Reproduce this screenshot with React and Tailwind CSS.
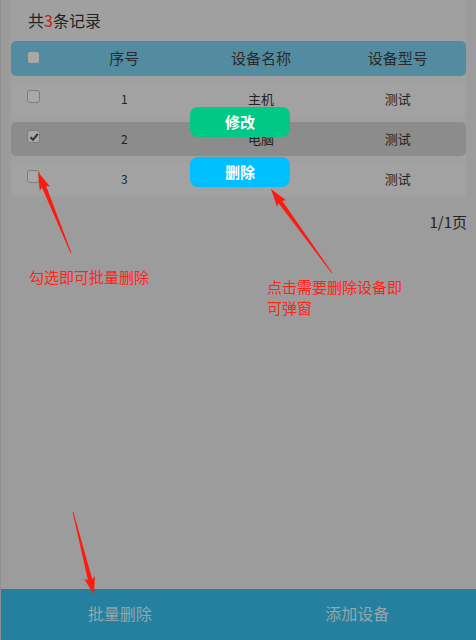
import React from "react";

const rows = [
  { id: 1, name: "主机", model: "测试", checked: false },
  { id: 2, name: "电脑", model: "测试", checked: true },
  { id: 3, name: "", model: "测试", checked: false },
];

// arrow drawn as a tapered shaft with a head, from tail to tip
function arrowPoints(tx, ty, hx, hy) {
  const dx = hx - tx;
  const dy = hy - ty;
  const len = Math.sqrt(dx * dx + dy * dy);
  const ux = dx / len;
  const uy = dy / len;
  const nx = -uy;
  const ny = ux;
  const headLen = 16;
  const bx = hx - ux * headLen;
  const by = hy - uy * headLen;
  const p = (x, y) => `${x.toFixed(1)},${y.toFixed(1)}`;
  return [
    p(tx + nx * 0.4, ty + ny * 0.4),
    p(bx + nx * 2.2, by + ny * 2.2),
    p(bx + nx * 5.5 - ux * 2, by + ny * 5.5 - uy * 2),
    p(hx, hy),
    p(bx - nx * 5.5 - ux * 2, by - ny * 5.5 - uy * 2),
    p(bx - nx * 2.2, by - ny * 2.2),
    p(tx - nx * 0.4, ty - ny * 0.4),
  ].join(" ");
}

function Box({ checked }) {
  return (
    <div className="w-[13px] h-[13px] rounded-[3px] border border-[#7d7d7d] bg-[#a9a9a9] flex items-center justify-center">
      {checked && (
        <svg width="10" height="10" viewBox="0 0 10 10">
          <path d="M1.5 5.2 L4 7.8 L8.8 2" stroke="#333" strokeWidth="2" fill="none" />
        </svg>
      )}
    </div>
  );
}

export default function App() {
  return (
    <div
      className="relative w-[476px] h-[640px] bg-[#9c9c9c] border-l border-[#8e8e8e] flex flex-col overflow-hidden"
      style={{ fontFamily: '"Noto Sans CJK SC", "Noto Sans", sans-serif' }}
    >
      <div className="mx-[10px] bg-[#a0a0a0] pb-[1px]">
        <div className="h-[42px] flex items-center pl-[17px] text-[16px] text-[#222] -mt-[1px]">
          共<span className="text-[#c0201a]">3</span>条记录
        </div>
        <div className="h-[35px] rounded-[5px] bg-[#538ca0] grid grid-cols-[45px_1fr_1fr_1fr] items-center text-[15px] text-[#2a2a2a]">
          <div className="pl-[16px] -mt-[2px]">
            <Box />
          </div>
          <div className="text-center">序号</div>
          <div className="text-center">设备名称</div>
          <div className="text-center">设备型号</div>
        </div>
        <div className="flex flex-col gap-[6px] mt-[6px]">
          {rows.map((r) => (
            <div
              key={r.id}
              className={`h-[34px] rounded-[5px] grid grid-cols-[45px_1fr_1fr_1fr] items-center text-[13px] text-[#222] ${
                r.checked ? "bg-[#8c8c8c]" : "bg-[#a2a2a2]"
              }`}
            >
              <div className="pl-[16px] -mt-[5px]">
                <Box checked={r.checked} />
              </div>
              <div className="text-center text-[12px] -mt-[1px]">{r.id}</div>
              <div className="text-center -mt-[1px]">{r.name}</div>
              <div className="text-center -mt-[1px]">{r.model}</div>
            </div>
          ))}
        </div>
      </div>

      <div className="flex justify-end pr-[9px] pt-[14px] text-[15px] text-[#222]">1/1页</div>

      <div className="flex mt-[32px] pl-[28px] text-[15px] text-[#ff2418]">
        <div className="w-[238px]">勾选即可批量删除</div>
        <div className="w-[145px] mt-[10px] leading-[21px]">点击需要删除设备即可弹窗</div>
      </div>

      <div className="flex-1" />

      <div className="h-[51px] bg-[#25809f] grid grid-cols-2 items-center text-[16px] text-[#93a7b0] pb-[4px]">
        <div className="text-center">批量删除</div>
        <div className="text-center">添加设备</div>
      </div>

      <div className="absolute left-[189px] top-[107px] w-[100px] h-[30px] rounded-[8px] bg-[#00c985] flex items-center justify-center text-white font-bold text-[15px]">
        修改
      </div>
      <div className="absolute left-[189px] top-[157px] w-[100px] h-[30px] rounded-[8px] bg-[#00bfff] flex items-center justify-center text-white font-bold text-[15px]">
        删除
      </div>

      <svg className="absolute left-0 top-0 pointer-events-none" width="476" height="640">
        <polygon points={arrowPoints(70, 253, 37, 172)} fill="#ff1a0f" />
        <polygon points={arrowPoints(331, 273, 270, 189)} fill="#ff1a0f" />
        <polygon points={arrowPoints(72, 512, 93, 595)} fill="#ff1a0f" />
      </svg>
    </div>
  );
}
